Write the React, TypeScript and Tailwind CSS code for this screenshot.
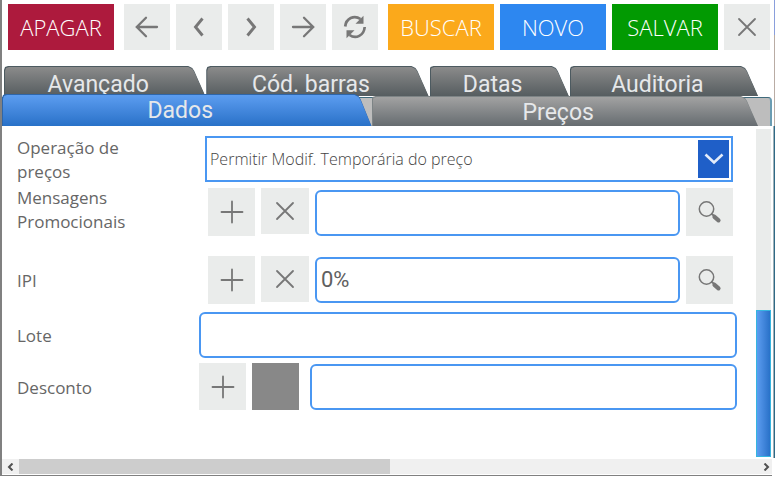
import { useState } from "react";
import type { ReactNode } from "react";

const Svg = ({ children, w = 2.2 }: { children: ReactNode; w?: number }) => (
  <svg
    width={32}
    height={32}
    viewBox="0 0 32 32"
    fill="none"
    stroke="currentColor"
    strokeWidth={w}
    strokeLinecap="round"
    strokeLinejoin="miter"
    aria-hidden="true"
  >
    {children}
  </svg>
);

const ArrowLeft = () => <Svg w={2.3}><path d="M26 16H6M15 6.800L5.800 16l9.200 9.200" /></Svg>;
const ArrowRight = () => <Svg w={2.3}><path d="M6 16h20M17 6.800l9.200 9.200-9.200 9.200" /></Svg>;
const ChevronLeft = () => <Svg w={2.9}><path d="M19.500 7.500L12.500 16l7 8.500" strokeLinecap="butt" /></Svg>;
const ChevronRight = () => <Svg w={2.9}><path d="M12.500 7.500l7 8.500-7 8.500" strokeLinecap="butt" /></Svg>;
const Close = () => <Svg w={1.8}><path d="M8 8l16 16M24 8L8 24" /></Svg>;
const Plus = () => <Svg w={1.8}><path d="M16 5.500v21M5.500 16h21" /></Svg>;
const Refresh = () => (
  <Svg w={2.7}>
    <path d="M6.200 15.500C7 7.500 15 3.500 21.500 8M25.700 16C25 24.500 17 28.500 10.500 24" strokeLinecap="butt" />
    <path d="M24.500 4.800v8h-8zM7.500 27.200v-8h8z" fill="currentColor" stroke="none" />
  </Svg>
);
const Search = () => (
  <Svg w={1.5}>
    <circle cx="12.500" cy="13" r="7.200" />
    <path d="M17.800 18l2.500 2" strokeWidth="2" />
    <path d="M20.500 20.800l4 3.500" strokeWidth="4.200" />
  </Svg>
);

function IconButton({
  label,
  children,
  size = "h-[46px] w-[46px]",
}: {
  label: string;
  children?: ReactNode;
  size?: string;
}) {
  return (
    <button
      type="button"
      aria-label={label}
      className={`flex shrink-0 items-center justify-center bg-[#eaeceb] text-[#777777] ${size}`}
    >
      {children}
    </button>
  );
}

function ActionButton({ color, children }: { color: string; children: ReactNode }) {
  return (
    <button
      type="button"
      className={`h-[46px] w-[106px] shrink-0 text-center font-['Open_Sans',sans-serif] text-[22px] leading-7 font-light text-white ${color}`}
    >
      {children}
    </button>
  );
}

const tabShape =
  "[clip-path:polygon(0_4px,1px_1px,4px_0,calc(100%_-_17px)_0,calc(100%_-_13px)_2px,calc(100%_-_11px)_5px,100%_100%,0_100%)]";

function Tab({
  name,
  size,
  face,
  edge,
  active,
  onSelect,
}: {
  name: string;
  size: string;
  face: string;
  edge: string;
  active: boolean;
  onSelect: (name: string) => void;
}) {
  return (
    <button
      type="button"
      role="tab"
      aria-selected={active}
      onClick={() => onSelect(name)}
      className={`min-w-0 pt-px pl-px ${tabShape} ${size} ${edge}`}
    >
      <span
        className={`block h-full pr-[14px] text-center font-[Roboto,sans-serif] text-[23px] text-[#e6e8ea] ${tabShape} ${face}`}
      >
        {name}
      </span>
    </button>
  );
}

function Row({
  label,
  id,
  className,
  labelClass = "self-center pt-0.5",
  fields,
  children,
}: {
  label: string;
  id: string;
  className: string;
  labelClass?: string;
  fields: string;
  children: ReactNode;
}) {
  return (
    <div className={`flex items-start ${className}`}>
      <div className={`w-[182px] shrink-0 pr-12 ${labelClass}`}>
        <label htmlFor={id} className="block font-['Open_Sans',sans-serif] text-[17px] leading-6 text-[#666666]">
          {label}
        </label>
      </div>
      <div className={`flex min-w-0 grow items-start ${fields}`}>{children}</div>
    </div>
  );
}

const inputStyle =
  "h-[46px] min-w-0 grow rounded-md border-2 border-[#4a97f2] bg-white px-1 pb-0.5 font-[Roboto,sans-serif] text-[22px] text-[#606060] outline-none";

const greyFace = "bg-linear-to-b from-[#8b8b8b] to-[#565d60] leading-9";

export default function App() {
  const [tab, setTab] = useState("Dados");
  const upper = { face: greyFace, edge: "bg-[#4c5a60]", onSelect: setTab };

  return (
    <div className="flex bg-white">
      <main className="min-w-0 grow border-b border-l-2 border-[#808080] pb-px">
        <header className="flex items-center gap-[6px] overflow-hidden pt-1 pl-[6px]">
          <ActionButton color="mr-1 bg-[#ad1a3d]">APAGAR</ActionButton>
          <IconButton label="Primeiro"><ArrowLeft /></IconButton>
          <IconButton label="Anterior"><ChevronLeft /></IconButton>
          <IconButton label="Próximo"><ChevronRight /></IconButton>
          <IconButton label="Último"><ArrowRight /></IconButton>
          <IconButton label="Atualizar"><Refresh /></IconButton>
          <ActionButton color="ml-1 bg-[#fba91b]">BUSCAR</ActionButton>
          <ActionButton color="bg-[#2d87f0]">NOVO</ActionButton>
          <ActionButton color="bg-[#029a02]">SALVAR</ActionButton>
          <IconButton label="Fechar"><Close /></IconButton>
        </header>

        <div role="tablist" className="mt-4">
          <div className="flex h-[30px] gap-px pr-[14px] pl-0.5">
            <Tab {...upper} name="Avançado" size="h-[30px] grow basis-[201px]" active={tab === "Avançado"} />
            <Tab {...upper} name="Cód. barras" size="h-[30px] grow basis-[222px]" active={tab === "Cód. barras"} />
            <Tab {...upper} name="Datas" size="h-[30px] grow basis-[139px]" active={tab === "Datas"} />
            <Tab {...upper} name="Auditoria" size="h-[30px] grow basis-[188px]" active={tab === "Auditoria"} />
          </div>
          <div className="-mt-0.5 grid">
            <div className="col-start-1 row-start-1 h-[29px] self-end rounded-tr border-t border-r-2 border-t-[#3f6a7c] border-r-[#6a9cb2] bg-[#bdbdbd]" />
            <div className="z-10 col-start-1 row-start-1 flex h-8 min-w-0 items-end pr-[14px]">
              <Tab
                name="Dados"
                size="h-8 grow basis-[369px]"
                face="bg-linear-to-b from-[#5c9df0] to-[#2871c8] leading-8"
                edge="bg-[#2e66aa]"
                active={tab === "Dados"}
                onSelect={setTab}
              />
              <Tab
                name="Preços"
                size="h-[30px] grow basis-[386px]"
                face="bg-linear-to-b from-[#a2a2a2] to-[#666c70] leading-8"
                edge="bg-[#7d8486]"
                active={tab === "Preços"}
                onSelect={setTab}
              />
            </div>
          </div>
        </div>

        <div className="flex">
          <form className="min-w-0 grow pt-[10px] pr-[19px] pl-[15px]">
            <Row label="Operação de preços" id="operacao" className="h-[50px]" labelClass="" fields="pr-1 pl-1.5">
              <div className="relative min-w-0 grow">
                <select
                  id="operacao"
                  className="block h-[46px] w-full appearance-none border-2 border-[#4a97f2] bg-white pr-10 pl-[3px] font-['Open_Sans',sans-serif] text-base font-light text-[#444444] outline-none"
                >
                  <option>Permitir Modif. Temporária do preço</option>
                </select>
                <span className="pointer-events-none absolute top-1 right-1 flex h-[38px] w-[31px] items-center justify-center bg-[#1f5fc8] text-[#e4ecfa]">
                  <svg
                    width="20"
                    height="12"
                    viewBox="0 0 20 12"
                    fill="none"
                    stroke="currentColor"
                    strokeWidth="2.600"
                    aria-hidden="true"
                  >
                    <path d="M1.500 1.500L10 9.500l8.500-8" />
                  </svg>
                </span>
              </div>
            </Row>
            <Row
              label="Mensagens Promocionais"
              id="mensagens"
              className="mb-5 h-[50px]"
              labelClass=""
              fields="gap-[6px] pt-0.5 pr-1 pl-[9px]"
            >
              <IconButton label="Adicionar mensagem" size="h-12 w-[47px]"><Plus /></IconButton>
              <IconButton label="Remover mensagem" size="h-[46px] w-12"><Close /></IconButton>
              <input id="mensagens" className={`mt-0.5 ${inputStyle}`} />
              <IconButton label="Pesquisar mensagem" size="h-12 w-[47px]"><Search /></IconButton>
            </Row>
            <Row label="IPI" id="ipi" className="mb-2 h-12" fields="gap-[6px] pr-1 pl-[9px]">
              <IconButton label="Adicionar IPI" size="h-12 w-[47px]"><Plus /></IconButton>
              <IconButton label="Remover IPI" size="h-[46px] w-12"><Close /></IconButton>
              <input id="ipi" defaultValue="0%" className={`mt-px ${inputStyle}`} />
              <IconButton label="Pesquisar IPI" size="h-12 w-[47px]"><Search /></IconButton>
            </Row>
            <Row label="Lote" id="lote" className="mb-[5px] h-[46px]" fields="">
              <input id="lote" className={inputStyle} />
            </Row>
            <Row label="Desconto" id="desconto" className="mb-[49px] h-[47px]" fields="">
              <IconButton label="Adicionar desconto" size="h-[47px] w-[47px]"><Plus /></IconButton>
              <button
                type="button"
                aria-label="Cor do desconto"
                className="ml-[6px] h-[47px] w-[47px] shrink-0 bg-[#888888]"
              />
              <input id="desconto" className={`mt-px ml-[11px] ${inputStyle}`} />
            </Row>
          </form>
          <div className="mt-[3px] mr-px mb-0.5 flex w-[15px] shrink-0 flex-col bg-[#eaeceb] pt-[181px]">
            <div className="grow border border-[#35b5e0] bg-linear-to-r from-[#5c9df0] to-[#2871c8]" />
          </div>
        </div>

        <div className="flex h-[15px] items-center justify-between bg-[#f0f0f0] text-[#505050]">
          <button type="button" aria-label="Rolar para a esquerda" className="flex w-[17px] justify-center">
            <svg width="7" height="8" viewBox="0 0 7 8" fill="none" stroke="currentColor" strokeWidth="2" aria-hidden="true">
              <path d="M5.500 .5L2 4l3.500 3.500" />
            </svg>
          </button>
          <div className="h-full grow">
            <div className="h-full w-1/2 bg-[#cdcdcd]" />
          </div>
          <button type="button" aria-label="Rolar para a direita" className="flex w-3 justify-center">
            <svg width="7" height="8" viewBox="0 0 7 8" fill="none" stroke="currentColor" strokeWidth="2" aria-hidden="true">
              <path d="M1.500 .5L5 4 1.500 7.500" />
            </svg>
          </button>
        </div>
      </main>
      <div className="flex w-[3px] shrink-0 flex-col items-end">
        <div className="h-[35px] w-px bg-[#8a9fdc]" />
        <div className="h-[91px] w-px bg-[#b9aca4]" />
        <div className="mb-[18px] w-0.5 grow border-l border-[#9fb2bb] bg-[#2f6a86]" />
      </div>
    </div>
  );
}
